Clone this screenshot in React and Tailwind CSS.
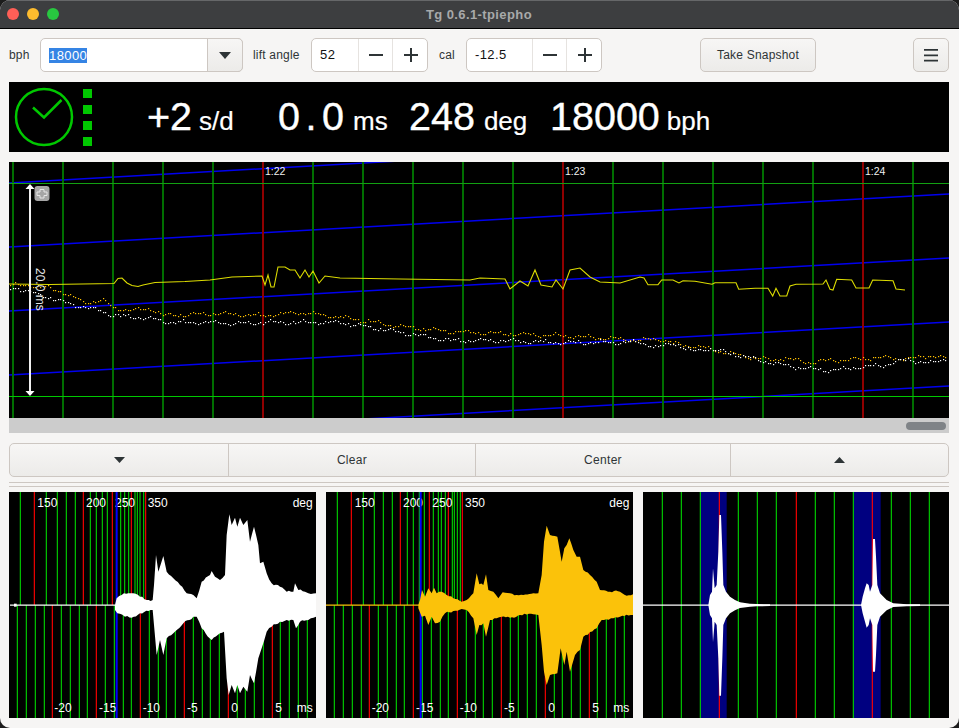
import React from "react";

const FONT = '"Liberation Sans", Arial, sans-serif';

const pts = (a) => a.map((p) => p.join(",")).join(" ");

const rough = (a, amp) => {
  const out = [];
  for (let i = 0; i < a.length; i++) {
    const [x0, y0] = a[i];
    const [x1, y1] = a[(i + 1) % a.length];
    out.push([x0, y0]);
    const d = Math.abs(x1 - x0);
    if (d < 12) continue;
    const n = Math.floor(d / 6);
    for (let k = 1; k < n; k++) {
      const t = k / n;
      const x = x0 + (x1 - x0) * t;
      const s = y0 < 360 ? -1 : 1;
      const j = amp * (Math.sin(x * 0.9) + Math.sin(x * 2.3 + 1)) * 0.6;
      out.push([+x.toFixed(1), +(y0 + (y1 - y0) * t + s * j).toFixed(1)]);
    }
  }
  return out;
};

const yellow = [[9,284],[50,284.5],[114,283.5],[118,278.5],[122,278],[127,283],[132,285.5],[138,286.5],[143,285],[155,282.5],[185,281.5],[210,280],[232,277],[262,276],[265,285],[268,275],[271,287],[274,287],[278,267],[285,267],[290,270],[295,270],[300,278],[305,270],[309,277],[313,271],[319,283],[325,276],[340,278],[400,279],[470,280],[480,278],[505,279],[510,289],[520,281],[528,286],[535,270],[541,285],[552,287],[556,280],[563,289],[570,270],[580,268],[590,277],[600,282],[620,283],[640,277],[644,278],[648,284.7],[658,284.7],[661.7,280],[673,280],[679,283],[683,280.7],[695,281.3],[712,284.3],[715,282.7],[736,282.7],[738.7,289.3],[755,288.3],[768,288.3],[772.7,296],[776,288.3],[780,296],[786.7,296],[790,286],[796,284.3],[823,284],[826,280],[830,289.3],[833,290],[836.7,279.3],[851.7,280],[856,288],[869,288],[872.7,280],[893,280.7],[896,289],[905,290]];

const orangeBase = [[9,285],[30,285],[45,287],[63,292],[83,302],[102,300],[112,307],[133,310],[150,308],[163,315],[213,313],[260,315],[300,312],[350,318],[400,326],[450,331],[500,333],[560,335],[640,340],[657,338],[673,343],[707,348],[740,355],[773,360],[780,357],[807,362],[827,360],[853,359],[873,357],[907,358],[933,355],[945,358]];
const whiteBase = [[9,288],[15,287],[33,293],[50,297],[57,300],[75,305],[100,310],[113,315],[150,318],[167,322],[210,322],[233,323],[263,322],[300,322],[340,322],[400,332],[450,340],[500,340],[560,342],[640,342],[657,347],[673,342],[690,351],[707,348],[740,355],[773,363],[807,368],[830,370],[857,367],[880,365],[907,359],[930,363],[945,358]];

const interp = (base, x) => {
  for (let i = 1; i < base.length; i++) {
    if (x <= base[i][0]) {
      const [x0, y0] = base[i - 1];
      const [x1, y1] = base[i];
      return y0 + ((y1 - y0) * (x - x0)) / (x1 - x0);
    }
  }
  return base[base.length - 1][1];
};
const dots = (base, seed) => {
  const out = [];
  for (let x = 10; x < 946; x += 2.5) {
    const n = Math.sin(x * 0.21 + seed) + 0.6 * Math.sin(x * 0.57 + seed * 2) + 0.4 * Math.sin(x * 1.37 + seed * 3);
    out.push([Math.round(x), Math.round(interp(base, x) + n * 1.4)]);
  }
  return out;
};

function StripChart() {
  const verts = [];
  for (let x = 12; x < 949; x += 50) verts.push(x);
  const reds = [262, 562, 862];
  return (
    <svg className="block w-[940px] h-[256px] bg-black" viewBox="9 162 940 256" style={{ fontFamily: FONT }}>
      {[183, 247, 311, 375, 439].map((y) => (
        <line key={y} x1="9" y1={y} x2="949" y2={y - 53} stroke="#0000f0" strokeWidth="1.5" />
      ))}
      {verts.map((x) => (
        <rect key={x} x={x} y="162" width="2" height="256" fill={reds.includes(x) ? "#900000" : "#006f00"} />
      ))}
      <rect x="9" y="183" width="940" height="1" fill="#12a012" />
      <rect x="9" y="396" width="940" height="1" fill="#00c800" />
      <polyline points={pts(yellow)} fill="none" stroke="#dcdc00" strokeWidth="1.1" />
      {dots(orangeBase, 1.3).map(([x, y], i) => (
        <rect key={"o" + i} x={x} y={y} width="1.2" height="1.2" fill="#ffc000" />
      ))}
      {dots(whiteBase, 4.1).map(([x, y], i) => (
        <rect key={"w" + i} x={x} y={y} width="1.2" height="1.2" fill="#ffffff" />
      ))}
      <rect x="29" y="186" width="2" height="207" fill="#f0f0f0" />
      <polygon points="30,184 34.5,189 25.5,189" fill="#ffffff" />
      <polygon points="30,396 34.5,391 25.5,391" fill="#ffffff" />
      <text x="36" y="268" transform="rotate(90 36 268)" fontSize="12" fill="#e8e8e8">20.0 ms</text>
      <rect x="34.5" y="186" width="15" height="15" rx="3" fill="#a6a6a6" />
      <path d="M40 189.500h4v2.500h3v3.500h-3v2.500h-4v-2.500h-3V192h3z" fill="#a6a6a6" stroke="#e6e6e6" strokeWidth="1" />
      {[["1:22", 265], ["1:23", 565], ["1:24", 865]].map(([t, x]) => (
        <text key={t} x={x} y="175" fontSize="10.500" fill="#f0f0f0">{t}</text>
      ))}
    </svg>
  );
}

function Scope({ vb, w, top, bottom, topRed, bottomRed, blue, env, color, topLabels, bottomLabels, deg, ms, lead, bump }) {
  return (
    <svg className="block h-[226px] bg-black shrink-0" style={{ width: w, fontFamily: FONT }} viewBox={vb}>
      {top.map((x) => (
        <line key={x} x1={x} y1="21" x2={x} y2="360" stroke={topRed.includes(x) ? "#ff0000" : "#00d000"} strokeWidth="3.4" />
      ))}
      {bottom.map((x) => (
        <line key={x} x1={x} y1="360" x2={x} y2="699" stroke={bottomRed.includes(x) ? "#ff0000" : "#00d000"} strokeWidth="3.4" />
      ))}
      {topLabels.map(([t, x]) => (
        <text key={t} x={x} y="66" fontSize="36" fill="#ffffff">{t}</text>
      ))}
      <text x={deg} y="66" fontSize="36" fill="#ffffff" textAnchor="end">deg</text>
      {bottomLabels.map(([t, x]) => (
        <text key={t} x={x} y="681" fontSize="36" fill="#ffffff">{t}</text>
      ))}
      <text x={ms} y="681" fontSize="36" fill="#ffffff" textAnchor="end">ms</text>
      <line x1={blue} y1="21" x2={blue} y2="699" stroke="#0000ff" strokeWidth="6" />
      <line x1={lead[0]} y1="360.500" x2={lead[1]} y2="360.500" stroke={color} strokeWidth="4" />
      {bump && <rect x="42" y="356" width="8" height="9" fill={color} />}
      {env}
    </svg>
  );
}

const wave1 = [[345,360],[350,340],[365,330],[385,325],[400,325],[420,335],[440,345],[458,345],[462,300],[468,210],[475,260],[490,213],[500,260],[520,280],[540,300],[560,325],[580,330],[590,340],[605,290],[630,270],[635,258],[645,275],[660,285],[675,270],[680,150],[688,88],[695,120],[705,98],[712,125],[720,98],[730,120],[742,105],[750,170],[762,125],[775,180],[780,235],[790,230],[800,265],[815,295],[840,305],[860,320],[880,320],[885,295],[895,315],[915,320],[925,325],[948,325],[948,395],[925,405],[900,410],[888,430],[880,405],[860,405],[840,410],[815,425],[800,440],[785,490],[775,520],[762,595],[750,570],[742,620],[730,605],[720,625],[712,600],[705,625],[695,600],[686,630],[680,580],[672,440],[660,445],[635,465],[605,430],[590,395],[580,395],[550,415],[520,445],[500,460],[490,510],[480,465],[470,510],[462,420],[458,375],[420,385],[395,398],[375,395],[352,385],[345,375]];

const wave2 = [[295,360],[300,345],[306,315],[315,335],[325,310],[335,325],[342,308],[350,325],[365,320],[380,330],[400,340],[425,350],[440,345],[460,325],[470,265],[478,298],[490,300],[498,268],[505,315],[520,320],[535,340],[548,322],[570,325],[590,330],[610,330],[640,325],[655,325],[665,270],[672,170],[680,122],[690,150],[712,155],[725,230],[733,190],[740,180],[748,160],[760,195],[770,215],[780,215],[790,255],[810,270],[830,290],[840,315],[870,320],[900,320],[920,332],[939,328],[939,390],[900,395],[880,400],[845,405],[830,430],[790,455],[780,495],[765,510],[750,560],[740,500],[733,540],[722,490],[712,565],[690,570],[680,600],[672,560],[665,480],[655,390],[640,388],[600,390],[570,398],[545,395],[530,400],[510,405],[498,455],[490,415],[478,420],[470,450],[460,400],[440,375],[425,372],[400,378],[375,385],[360,410],[345,415],[335,395],[325,420],[315,392],[305,395],[295,370]];

const wave3a = [[205,360],[210,330],[216,320],[219,250],[224,310],[230,300],[235,200],[238,90],[243,90],[247,200],[250,300],[258,320],[270,335],[285,345],[300,352],[330,356],[350,357],[390,358],[390,363],[350,364],[330,365],[300,369],[285,376],[270,385],[258,400],[250,420],[247,520],[243,632],[238,632],[235,520],[230,420],[224,410],[219,472],[216,400],[210,390]];
const wave3b = [[663,360],[668,335],[675,310],[680,295],[686,300],[690,320],[697,300],[699,162],[705,162],[708,215],[712,300],[720,325],[740,345],[760,355],[800,358],[840,358],[840,363],[800,364],[760,366],[740,376],[720,395],[712,420],[708,510],[705,560],[699,560],[697,420],[690,400],[686,420],[680,428],[675,410],[668,385]];

const GradBtn = "bg-gradient-to-b from-[#f7f6f5] to-[#ecebe9] border border-[#cdc7c2]";

const Minus = () => (
  <svg width="16" height="16" viewBox="0 0 16 16"><rect x="1" y="7" width="14" height="2" fill="#2e3436" /></svg>
);
const Plus = () => (
  <svg width="16" height="16" viewBox="0 0 16 16"><path d="M7 1h2v6h6v2H9v6H7V9H1V7h6z" fill="#2e3436" /></svg>
);

function Spin({ value, w, inputW }) {
  return (
    <div className={`flex h-[34px] ${w} rounded-[5px] border border-[#cdc7c2] bg-white shrink-0`}>
      <div className={`${inputW} flex items-center pl-[8px] text-[13px] tracking-[0.4px] text-[#111]`}>{value}</div>
      <div className="w-[35px] flex items-center justify-center border-l border-[#e6e3e0] pl-[1px]"><Minus /></div>
      <div className="w-[35px] flex items-center justify-center border-l border-[#e6e3e0] pl-[1px]"><Plus /></div>
    </div>
  );
}

const Big = ({ children }) => <span className="text-[39.5px] leading-none [-webkit-text-stroke:0.4px_white]">{children}</span>;
const Unit = ({ children }) => <span className="text-[26px] leading-none ml-[7px] [-webkit-text-stroke:0.2px_white]">{children}</span>;

export default function App() {
  return (
    <div className="w-[959px] h-[728px] bg-[#1c1c1c] overflow-hidden" style={{ fontFamily: FONT }}>
      <div className="h-full flex flex-col rounded-[10px] overflow-hidden bg-[#f6f5f4]">
        <div className="relative h-[29px] shrink-0 bg-[#3d3e40] border-t border-t-[#666769] border-b border-b-black flex items-center justify-center">
          <div className="absolute left-[7px] top-[7px] flex gap-[8px]">
            <div className="w-[12px] h-[12px] rounded-full bg-[#ff5f57]" />
            <div className="w-[12px] h-[12px] rounded-full bg-[#febc2e]" />
            <div className="w-[12px] h-[12px] rounded-full bg-[#28c840]" />
          </div>
          <span className="text-[13px] font-bold tracking-[0.4px] text-[#a8a9aa] -ml-[1px]">Tg 0.6.1-tpiepho</span>
        </div>

        <div className="flex flex-col pl-[9px] pr-[10px] pt-[9px]">
          <div className="flex items-center h-[34px] text-[12px] tracking-[0.2px] text-[#2e3436]">
            <span className="w-[31px] shrink-0">bph</span>
            <div className="flex h-[34px] w-[203px] shrink-0 rounded-[5px] border border-[#cdc7c2] bg-white">
              <div className="flex-1 flex items-center pl-[8px]">
                <span className="bg-[#3584e4] text-white text-[13px] tracking-[0.4px] leading-[15px]">18000</span>
              </div>
              <div className={`w-[36px] -my-px -mr-px rounded-r-[5px] flex items-center justify-center ${GradBtn}`}>
                <svg width="12" height="7" viewBox="0 0 12 7"><polygon points="0,0 12,0 6,7" fill="#2e3436" /></svg>
              </div>
            </div>
            <span className="ml-[10px] w-[48px] shrink-0 whitespace-nowrap">lift angle</span>
            <div className="ml-[10px]"><Spin value="52" w="w-[117px]" inputW="w-[46px]" /></div>
            <span className="ml-[11px] w-[27px] shrink-0">cal</span>
            <Spin value="-12.5" w="w-[136px]" inputW="w-[65px]" />
            <div className={`ml-[98px] w-[116px] h-[34px] rounded-[5px] flex items-center justify-center ${GradBtn}`}>Take Snapshot</div>
            <div className={`ml-auto w-[36px] h-[34px] rounded-[5px] flex items-center justify-center ${GradBtn}`}>
              <svg width="14" height="13" viewBox="0 0 14 13"><path d="M0 0h14v1.800H0zM0 5.400h14v1.800H0zM0 10.800h14v1.800H0z" fill="#2e3436" /></svg>
            </div>
          </div>

          <div className="mt-[10px] h-[70px] bg-black text-white flex items-center">
            <svg className="ml-[5px] shrink-0" width="60" height="60" viewBox="0 0 60 60">
              <circle cx="30" cy="30" r="28" fill="none" stroke="#00c800" strokeWidth="2.500" />
              <polyline points="19,20.500 30,30.500 47.500,13" fill="none" stroke="#00c800" strokeWidth="2.500" />
            </svg>
            <div className="ml-[9px] flex flex-col gap-[7px] shrink-0">
              {[0, 1, 2, 3].map((i) => <div key={i} className="w-[9px] h-[9px] bg-[#00c800]" />)}
            </div>
            <div className="ml-[55px] flex items-baseline">
              <div className="w-[131px] shrink-0 flex items-baseline"><Big>+2</Big><Unit>s/d</Unit></div>
              <div className="w-[131px] shrink-0 flex items-baseline">
                <Big><span className="inline-block w-[22px] text-center">0</span><span className="inline-block w-[22px] text-center">.</span><span className="inline-block w-[22px] text-center">0</span></Big>
                <span className="w-[2px]" /><Unit>ms</Unit>
              </div>
              <div className="w-[141px] shrink-0 flex items-baseline"><Big>248</Big><span className="w-[2px]" /><Unit>deg</Unit></div>
              <div className="shrink-0 flex items-baseline"><Big>18000</Big><Unit>bph</Unit></div>
            </div>
          </div>

          <div className="mt-[10px]">
            <StripChart />
            <div className="h-[15px] bg-[#cccccc] flex items-center justify-end pr-[3px]">
              <div className="w-[40px] h-[8px] rounded-full bg-[#7f8387]" />
            </div>
          </div>

          <div className={`mt-[10px] h-[34px] rounded-[5px] flex text-[12px] tracking-[0.3px] text-[#2e3436] ${GradBtn}`}>
            <div className="w-[218px] flex items-center justify-center">
              <svg width="11" height="6" viewBox="0 0 11 6"><polygon points="0,0 11,0 5.500,6" fill="#2e3436" /></svg>
            </div>
            <div className="w-[247px] border-l border-[#cdc7c2] flex items-center justify-center">Clear</div>
            <div className="w-[255px] border-l border-[#cdc7c2] flex items-center justify-center">Center</div>
            <div className="flex-1 border-l border-[#cdc7c2] flex items-center justify-center">
              <svg width="11" height="6" viewBox="0 0 11 6"><polygon points="0,6 11,6 5.500,0" fill="#2e3436" /></svg>
            </div>
          </div>

          <div className="mt-[5px] h-[1px] bg-[#cdc7c2]" />
          <div className="mt-[3px] h-[1px] bg-[#cdc7c2]" />

          <div className="mt-[5px] flex gap-[10px]">
            <Scope
              vb="27 21 921 678"
              w={307}
              top={[61,103,139,172,199,226,250,271,289,307,322,337,362,374,386,394,405,412,420,431,437]}
              topRed={[103,250,337,394,437]}
              bottom={[52,79,106,133,157,184,211,238,262,289,316,343,370,394,421,448,475,499,526,553,580,607,631,658,685,712,736,763,790,817,841,868,895,922]}
              bottomRed={[157,289,421,553,685,817]}
              blue={350}
              color="#ffffff"
              lead={[30, 346]}
              bump
              topLabels={[["150",112],["200",258],["250",345],["350",443]]}
              bottomLabels={[["-20",163],["-15",297],["-10",428],["-5",561],["0",694],["5",826]]}
              deg={938}
              ms={938}
              env={<polygon points={pts(rough(wave1, 3))} fill="#ffffff" />}
            />
            <Scope
              vb="18 21 921 678"
              w={307}
              top={[52,94,130,163,190,217,241,262,280,298,313,328,340,355,364,376,385,397,403,412,421,427]}
              topRed={[94,241,328,385,427]}
              bottom={[43,70,97,124,148,175,202,229,253,280,307,334,361,385,412,439,466,490,517,544,571,595,622,649,676,703,727,754,781,808,832,859,886,913]}
              bottomRed={[148,280,412,544,676,808]}
              blue={302}
              color="#fbc20a"
              lead={[18, 297]}
              topLabels={[["150",104],["200",249],["250",337],["350",435]]}
              bottomLabels={[["-20",155],["-15",288],["-10",419],["-5",552],["0",685],["5",817]]}
              deg={928}
              ms={928}
              env={<polygon points={pts(rough(wave2, 3))} fill="#fbc20a" />}
            />
            <svg className="block w-[306px] h-[226px] bg-black shrink-0" viewBox="9 21 918 678">
              <rect x="181" y="21" width="79" height="678" fill="#000080" />
              <rect x="640" y="21" width="82" height="678" fill="#000080" />
              {[67,124,181,295,352,409,526,583,640,754,811,868].map((x) => (
                <line key={x} x1={x} y1="21" x2={x} y2="699" stroke="#00d000" strokeWidth="3.400" />
              ))}
              {[238,469,697].map((x) => (
                <line key={x} x1={x} y1="21" x2={x} y2="699" stroke="#ff0000" strokeWidth="3.400" />
              ))}
              <line x1="9" y1="360.500" x2="927" y2="360.500" stroke="#ffffff" strokeWidth="4" />
              <polygon points={pts(wave3a)} fill="#ffffff" />
              <polygon points={pts(wave3b)} fill="#ffffff" />
            </svg>
          </div>
        </div>
      </div>
    </div>
  );
}
